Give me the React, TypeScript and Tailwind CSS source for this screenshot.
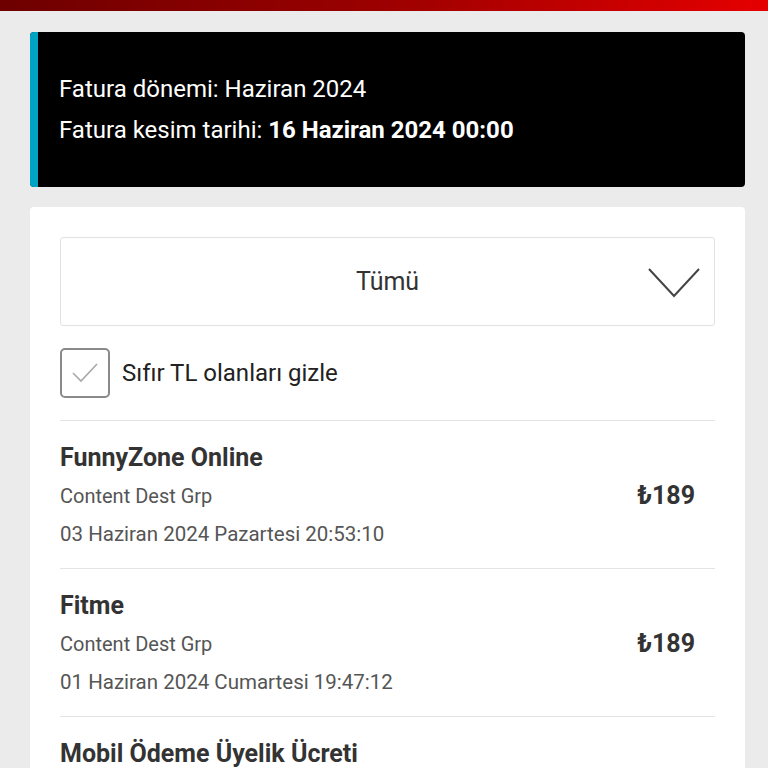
import React from "react";

const items = [
  {
    title: "FunnyZone Online",
    sub: "Content Dest Grp",
    date: "03 Haziran 2024 Pazartesi 20:53:10",
    price: "₺189",
  },
  {
    title: "Fitme",
    sub: "Content Dest Grp",
    date: "01 Haziran 2024 Cumartesi 19:47:12",
    price: "₺189",
  },
  {
    title: "Mobil Ödeme Üyelik Ücreti",
    sub: "Content Dest Grp",
    date: "01 Haziran 2024 Cumartesi 19:47:12",
    price: "₺0",
  },
];

function ChargeRow({ title, sub, date, price }: (typeof items)[number]) {
  return (
    <div className="flex items-center justify-between border-t border-[#e4e4e4] pt-[18px] pb-[15px]">
      <div className="flex flex-col">
        <p className="text-[25px] leading-[38px] font-bold text-[#333]">{title}</p>
        <p className="text-[20px] leading-[38px] text-[#555]">{sub}</p>
        <p className="text-[20.5px] leading-[38px] text-[#555]">{date}</p>
      </div>
      <p className="text-[25px] font-bold text-[#333] pr-5">{price}</p>
    </div>
  );
}

export default function App() {
  return (
    <div
      className="h-[768px] overflow-hidden bg-[#ebebeb]"
      style={{ fontFamily: "Roboto, 'Noto Sans', sans-serif" }}
    >
      {/* top bar */}
      <div className="h-[11px] bg-gradient-to-r from-[#6e0000] via-[#9c0000] to-[#e60000]" />

      <div className="pl-[30px] pr-[23px] pt-[21px] flex flex-col gap-5">
        {/* bill period card */}
        <div className="flex h-[155px] rounded-[4px] overflow-hidden bg-black">
          <div className="w-[8px] bg-[#00a3c4]" />
          <div className="flex flex-col justify-center pl-[21px] text-white text-[24px] leading-[41px]">
            <p>Fatura dönemi: Haziran 2024</p>
            <p>
              Fatura kesim tarihi: <span className="font-bold">16 Haziran 2024 00:00</span>
            </p>
          </div>
        </div>

        {/* list card */}
        <div className="bg-white rounded-[4px] px-[30px] pt-[30px]">
          <div className="relative flex h-[89px] items-center justify-center rounded-[3px] border border-[#e2e2e2]">
            <span className="text-[25px] text-[#333]">Tümü</span>
            <svg
              className="absolute right-[14px] top-[30px]"
              width="52"
              height="30"
              viewBox="0 0 52 30"
              fill="none"
            >
              <path d="M1 1 L26 28 L51 1" stroke="#444" strokeWidth="2" />
            </svg>
          </div>

          <div className="flex items-center gap-3 py-[22px]">
            <div className="flex h-[50px] w-[50px] items-center justify-center rounded-[5px] border-2 border-[#8a8a8a]">
              <svg width="26" height="20" viewBox="0 0 26 20" fill="none">
                <path d="M1 10 L9 18 L25 1" stroke="#a8a8a8" strokeWidth="1.6" />
              </svg>
            </div>
            <span className="text-[24px] text-[#222]">Sıfır TL olanları gizle</span>
          </div>

          {items.map((it, i) => (
            <ChargeRow key={i} {...it} />
          ))}
        </div>
      </div>
    </div>
  );
}
